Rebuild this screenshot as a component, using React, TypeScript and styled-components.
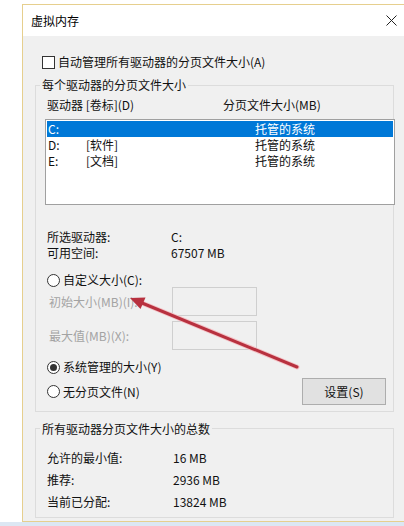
import React from "react";
import styled, { createGlobalStyle } from "styled-components";

const GlobalStyle = createGlobalStyle`
  html, body {
    margin: 0;
    padding: 0;
    width: 404px;
    height: 526px;
    overflow: hidden;
    background: #ffffff;
  }
  #root { height: 100%; }
  * { box-sizing: border-box; }
`;

const Root = styled.div`
  position: relative;
  height: 526px;
  display: flex;
  flex-direction: column;
  font-family: "Noto Sans CJK SC", "Microsoft YaHei", sans-serif;
  font-size: 12px;
  color: #111;
`;

const Window = styled.div`
  margin: 4px 0 0 22px;
  width: 390px;
  height: 518px;
  flex-shrink: 0;
  border: 1px solid #e6cf8e;
  background: #f0f0f0;
  display: flex;
  flex-direction: column;
  overflow: hidden;
`;

const TitleBar = styled.div`
  height: 31px;
  flex-shrink: 0;
  background: #ffffff;
  display: flex;
  align-items: center;
  justify-content: space-between;
  padding: 0 14px 0 8px;
`;

const Title = styled.span`
  line-height: 14px;
  color: #000;
`;

const Body = styled.div`
  flex: 1;
  display: flex;
  flex-direction: column;
  padding: 0 17px 3px 12px;
`;

const CheckRow = styled.label`
  margin-top: 19px;
  height: 14px;
  display: flex;
  align-items: center;
  gap: 3px;
  padding-left: 7px;
  line-height: 14px;
`;

const CheckBox = styled.span`
  width: 13px;
  height: 13px;
  border: 1px solid #333;
  background: #fff;
  flex-shrink: 0;
`;

const GroupBox = styled.div<{ $mt: number; $grow?: boolean }>`
  margin-top: ${(p) => p.$mt}px;
  border: 1px solid #dcdcdc;
  display: flex;
  flex-direction: column;
  flex: ${(p) => (p.$grow ? "1" : "none")};
  padding-bottom: ${(p) => (p.$grow ? 0 : 6)}px;
`;

const Legend = styled.span<{ $offset: number }>`
  align-self: flex-start;
  margin: -${(p) => p.$offset}px 0 0 4px;
  padding: 0 2px;
  height: 14px;
  line-height: 14px;
  background: #f0f0f0;
`;

const HeaderRow = styled.div`
  margin-top: 6px;
  height: 14px;
  line-height: 14px;
  display: grid;
  grid-template-columns: 176px 1fr;
  padding-left: 11px;
`;

const ListBox = styled.div`
  margin: 7px -2px 0 9px;
  height: 86px;
  border: 1px solid #a0a0a0;
  background: #ffffff;
  padding: 1px;
`;

const ListRow = styled.div<{ $selected?: boolean }>`
  height: 16px;
  line-height: 16px;
  display: grid;
  grid-template-columns: 38px 169px 1fr;
  padding-left: 1px;
  background: ${(p) => (p.$selected ? "#0078d7" : "transparent")};
  color: ${(p) => (p.$selected ? "#ffffff" : "#111")};
`;

const InfoGrid = styled.div<{ $mt: number; $col: number; $rowH: number }>`
  margin-top: ${(p) => p.$mt}px;
  display: grid;
  grid-template-columns: ${(p) => p.$col}px 1fr;
  grid-auto-rows: ${(p) => p.$rowH}px;
  align-items: center;
  padding-left: 11px;
  line-height: 14px;
`;

const RadioRow = styled.label<{ $mt?: number }>`
  margin-top: ${(p) => p.$mt ?? 0}px;
  height: 14px;
  display: flex;
  align-items: center;
  gap: 3px;
  padding-left: ${(p) => (p.$mt === undefined ? 0 : 11)}px;
  line-height: 14px;
`;

const Radio = styled.span<{ $checked?: boolean }>`
  width: 13px;
  height: 13px;
  border-radius: 50%;
  border: 1px solid #333;
  background: #fff;
  flex-shrink: 0;
  display: flex;
  align-items: center;
  justify-content: center;
  &::after {
    content: "";
    width: 7px;
    height: 7px;
    border-radius: 50%;
    background: ${(p) => (p.$checked ? "#333" : "transparent")};
  }
`;

const SizeRow = styled.div<{ $mt: number }>`
  margin-top: ${(p) => p.$mt}px;
  display: grid;
  grid-template-columns: 123px 85px;
  align-items: center;
  padding-left: 13px;
`;

const DisabledLabel = styled.span`
  color: #a3a3a3;
  line-height: 14px;
`;

const SizeInput = styled.div`
  height: 29px;
  border: 1px solid #cfcfcf;
  background: #f0f0f0;
`;

const BottomRow = styled.div`
  margin-top: 4px;
  height: 27px;
  display: flex;
  align-items: center;
  justify-content: space-between;
  padding: 0 7px 0 11px;
`;

const Button = styled.div`
  width: 84px;
  height: 27px;
  border: 1px solid #adadad;
  background: #e1e1e1;
  display: flex;
  align-items: center;
  justify-content: center;
  line-height: 14px;
`;

const BottomStrip = styled.div`
  flex: 1;
  background: #dce7f3;
`;

const ArrowLayer = styled.svg`
  position: absolute;
  left: 0;
  top: 0;
  width: 404px;
  height: 526px;
  pointer-events: none;
`;

const CloseIcon = () => (
  <svg width="11" height="11" viewBox="0 0 11 11">
    <path d="M0.5 0.5 L10.5 10.5 M10.5 0.5 L0.5 10.5" stroke="#222" strokeWidth="1" fill="none" />
  </svg>
);

const drives = [
  { letter: "C:", label: "", size: "托管的系统", selected: true },
  { letter: "D:", label: "[软件]", size: "托管的系统" },
  { letter: "E:", label: "[文档]", size: "托管的系统" },
];

export default function App() {
  return (
    <Root>
      <GlobalStyle />
      <Window>
        <TitleBar>
          <Title>虚拟内存</Title>
          <CloseIcon />
        </TitleBar>
        <Body>
          <CheckRow>
            <CheckBox />
            <span>自动管理所有驱动器的分页文件大小(A)</span>
          </CheckRow>

          <GroupBox $mt={16}>
            <Legend $offset={8}>每个驱动器的分页文件大小</Legend>
            <HeaderRow>
              <span>驱动器 [卷标](D)</span>
              <span>分页文件大小(MB)</span>
            </HeaderRow>
            <ListBox>
              {drives.map((d) => (
                <ListRow key={d.letter} $selected={d.selected}>
                  <span>{d.letter}</span>
                  <span>{d.label}</span>
                  <span>{d.size}</span>
                </ListRow>
              ))}
            </ListBox>

            <InfoGrid $mt={24} $col={124} $rowH={16}>
              <span>所选驱动器:</span>
              <span>C:</span>
              <span>可用空间:</span>
              <span>67507 MB</span>
            </InfoGrid>

            <RadioRow $mt={12}>
              <Radio />
              <span>自定义大小(C):</span>
            </RadioRow>
            <SizeRow $mt={0}>
              <DisabledLabel>初始大小(MB)(I):</DisabledLabel>
              <SizeInput />
            </SizeRow>
            <SizeRow $mt={5}>
              <DisabledLabel>最大值(MB)(X):</DisabledLabel>
              <SizeInput />
            </SizeRow>
            <RadioRow $mt={10}>
              <Radio $checked />
              <span>系统管理的大小(Y)</span>
            </RadioRow>
            <BottomRow>
              <RadioRow>
                <Radio />
                <span>无分页文件(N)</span>
              </RadioRow>
              <Button>设置(S)</Button>
            </BottomRow>
          </GroupBox>

          <GroupBox $mt={16} $grow>
            <Legend $offset={7}>所有驱动器分页文件大小的总数</Legend>
            <InfoGrid $mt={11} $col={126} $rowH={22}>
              <span>允许的最小值:</span>
              <span>16 MB</span>
              <span>推荐:</span>
              <span>2936 MB</span>
              <span>当前已分配:</span>
              <span>13824 MB</span>
            </InfoGrid>
          </GroupBox>
        </Body>
      </Window>
      <BottomStrip />
      <ArrowLayer viewBox="0 0 404 526">
        <line x1="297" y1="367" x2="142" y2="303" stroke="#f4c4c8" strokeWidth="5" strokeLinecap="round" />
        <line x1="297" y1="367" x2="142" y2="303" stroke="#b8313f" strokeWidth="3" strokeLinecap="round" />
        <polygon points="130,298 145.5,297.5 140.5,309" fill="#b8313f" />
      </ArrowLayer>
    </Root>
  );
}
